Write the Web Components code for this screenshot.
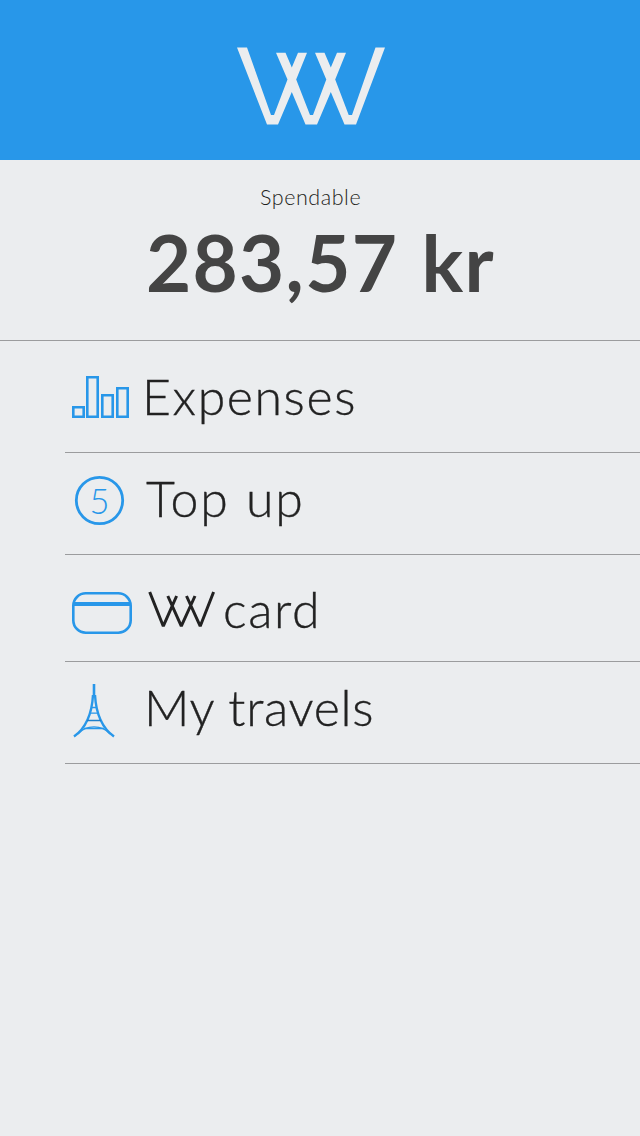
<!DOCTYPE html>
<html lang="en">
<head>
<meta charset="utf-8">
<title>Wallet</title>
<style>
html,body{margin:0;height:100%;background:#ebedef;font-family:Lato,"Open Sans",sans-serif}
</style>
</head>
<body>
<wallet-app></wallet-app>
<script>
class Base extends HTMLElement{
  connectedCallback(){
    if(this.shadowRoot) return;
    this.attachShadow({mode:'open'}).innerHTML=this.render();
  }
}
class BrandHeader extends Base{
  render(){return `<style>:host{display:block;height:160px;background:#2897e9}svg{display:block}</style>
  <svg width="640" height="160" fill="#ebedef">
    <path d="M237 47.5H247L271 115H274L287.500 79.500L276 52.800H285.500L291.800 67.500L298 52.800H307L296.200 79.500L310 115H313L326.300 79.500L315 52.800H324.500L330.800 67.500L337 52.800H346L335.200 79.500L348.700 115H352L375.500 47.500H385L356 124.500H344.500L330.800 92L317 124.500H305.500L291.800 92L278 124.500H267Z"/>
  </svg>`}
}
class BalancePanel extends Base{
  render(){return `<style>
  :host{display:flex;flex-direction:column;height:180px;border-bottom:1px solid #9b9c9e}
  .cap{font-size:21.5px;font-weight:300;line-height:26px;color:#1e1e20;padding:24px 0 0 260px;letter-spacing:.55px}
  .sum{font-size:78px;font-weight:700;line-height:94px;color:#444;padding:5px 0 0 146px;letter-spacing:1.3px;word-spacing:3px;white-space:nowrap}
  </style><div class="cap"><slot name="caption"></slot></div><div class="sum"><slot></slot></div>`}
}
class MenuRow extends Base{
  render(){return `<style>
  :host{display:flex;box-sizing:border-box;margin-left:65px;height:var(--h);padding-top:var(--top);border-bottom:1px solid #9b9c9e}
  .label{font-size:50px;font-weight:300;line-height:60px;color:#222;letter-spacing:var(--ls,0);word-spacing:var(--ws,0);padding-left:var(--gap,3px);white-space:nowrap;display:flex;-webkit-text-stroke:.35px #222}
  </style><slot name="icon"></slot><div class="label"><slot></slot></div>`}
}
const icons={
  bars:`<svg width="75" height="60" viewBox="65 366 75 60" fill="none" stroke="#2897e9" stroke-width="2.6"><path d="M73.300 407.300h10.400v9.400H73.300zM87.300 377.300h10.400v39.400H87.300zM102.300 395.300h10.400v21.400H102.300zM117.300 388.300h10.400v28.400H117.300z"/></svg>`,
  coin:`<svg width="75" height="60" viewBox="65 468 75 60" fill="none" stroke="#2897e9"><circle cx="99.500" cy="500.500" r="23.200" stroke-width="2.800"/><text x="99.500" y="513.700" text-anchor="middle" font-family="Lato" font-weight="300" font-size="35" fill="#2897e9" stroke="none" textLength="20" lengthAdjust="spacingAndGlyphs">5</text></svg>`,
  card:`<svg width="75" height="60" viewBox="65 579 75 60" fill="none" stroke="#2897e9"><rect x="73.300" y="593.300" width="57.400" height="39.400" rx="12.500" stroke-width="2.600"/><path d="M73 604h58" stroke-width="4"/></svg>`,
  tower:`<svg width="75" height="60" viewBox="65 677 75 60" overflow="visible" fill="none" stroke="#2897e9"><path d="M94 684v13" stroke-width="2.600"/><path d="M93 695C92 713 86 728 74 736.500M95 695C96 713 102 728 114 736.500" stroke-width="2.400"/><path d="M78 734C86 724.500 102 724.500 110 734" stroke-width="1.200"/><path d="M91 707.500h6M89.500 713.200h9M84 728.500h20" stroke-width="1.300"/><path d="M87 720.500h14" stroke="#1f7fca" stroke-width="1.500"/></svg>`
};
class MenuIcon extends Base{
  render(){return `<style>:host{display:block;flex:none;width:75px;height:60px}svg{display:block}</style>${icons[this.getAttribute('name')]}`}
}
class BrandMark extends Base{
  render(){return `<style>:host{display:block;width:75px;height:60px}svg{display:block}</style>
  <svg width="75" height="60" viewBox="148 579 75 60" fill="none" stroke="#222" stroke-width="3" stroke-linejoin="bevel"><path d="M149.700 592L163.300 626.200L176.600 596M167.800 596L181.300 626.200L195 596M186.500 596L200.200 626.200L213.600 592"/></svg>`}
}
class WalletApp extends Base{
  render(){return `<style>:host{display:block;width:640px;min-height:1136px;background:#ebedef}</style>
  <brand-header></brand-header>
  <balance-panel><span slot="caption">Spendable</span>283,57 kr</balance-panel>
  <menu-row style="--h:112px;--top:25px;--gap:2px;--ls:1.6px"><menu-icon slot="icon" name="bars"></menu-icon>Expenses</menu-row>
  <menu-row style="--h:102px;--top:15px;--gap:6px;--ls:1.8px;--ws:1px"><menu-icon slot="icon" name="coin"></menu-icon>Top up</menu-row>
  <menu-row style="--h:107px;--top:24px;--gap:8px;--ls:1.6px"><menu-icon slot="icon" name="card"></menu-icon><brand-mark></brand-mark>card</menu-row>
  <menu-row style="--h:102px;--top:15px;--gap:4px;--ls:.7px"><menu-icon slot="icon" name="tower"></menu-icon>My travels</menu-row>`}
}
customElements.define('brand-header',BrandHeader);
customElements.define('balance-panel',BalancePanel);
customElements.define('menu-row',MenuRow);
customElements.define('menu-icon',MenuIcon);
customElements.define('brand-mark',BrandMark);
customElements.define('wallet-app',WalletApp);
</script>
</body>
</html>
